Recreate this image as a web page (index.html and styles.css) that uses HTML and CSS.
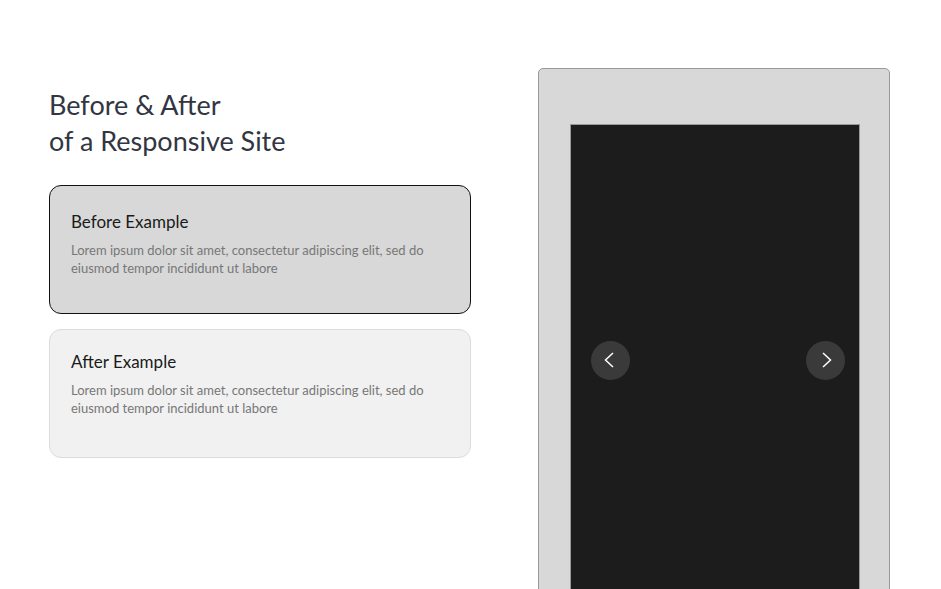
FILE: index.html
```html
<!DOCTYPE html>
<html lang="en">
<head>
<meta charset="utf-8">
<title>Before &amp; After</title>
<link rel="stylesheet" href="styles.css">
</head>
<body>
<main class="page">
  <section class="intro">
    <h1 class="heading">Before &amp; After<br>of a Responsive Site</h1>
    <div class="cards">
      <article class="card card-active">
        <h2 class="card-title">Before Example</h2>
        <p class="card-text">Lorem ipsum dolor sit amet, consectetur adipiscing elit, sed do eiusmod tempor incididunt ut labore</p>
      </article>
      <article class="card">
        <h2 class="card-title">After Example</h2>
        <p class="card-text">Lorem ipsum dolor sit amet, consectetur adipiscing elit, sed do eiusmod tempor incididunt ut labore</p>
      </article>
    </div>
  </section>
  <section class="device">
    <div class="screen">
      <button class="nav-btn nav-prev" aria-label="Previous">
        <svg width="10" height="16" viewBox="0 0 10 16"><path d="M9 1 L1.5 8 L9 15" fill="none" stroke="#fff" stroke-width="1.5"/></svg>
      </button>
      <button class="nav-btn nav-next" aria-label="Next">
        <svg width="10" height="16" viewBox="0 0 10 16"><path d="M1 1 L8.5 8 L1 15" fill="none" stroke="#fff" stroke-width="1.5"/></svg>
      </button>
    </div>
  </section>
</main>
</body>
</html>
```
FILE: styles.css
```css
html, body {
  margin: 0;
  padding: 0;
  height: 100%;
  overflow: hidden;
  background: #fff;
}
body {
  font-family: Lato, "Noto Sans", sans-serif;
}
.page {
  display: flex;
  align-items: flex-start;
  gap: 67px;
  padding: 68px 0 0 49px;
}
.intro {
  width: 422px;
  padding-top: 19px;
}
.heading {
  margin: 0 0 26px 0;
  font-size: 27px;
  font-weight: 400;
  line-height: 36px;
  color: #323642;
}
.cards {
  display: flex;
  flex-direction: column;
  gap: 15px;
}
.card {
  box-sizing: border-box;
  height: 129px;
  padding: 22px 21px 0;
  background: #f1f1f1;
  border: 1px solid #dcdcdc;
  border-radius: 12px;
}
.card-active {
  padding-top: 26px;
  background: #d8d8d8;
  border-color: #111;
}
.card-title {
  margin: 0 0 9px;
  font-size: 17px;
  font-weight: 400;
  line-height: 20px;
  color: #1a1a1a;
}
.card-text {
  margin: 0;
  font-size: 13px;
  line-height: 18px;
  color: #777;
}
.device {
  box-sizing: border-box;
  width: 352px;
  height: 560px;
  padding: 55px 29px 0 31px;
  background: #d8d8d8;
  border: 1px solid #999;
  border-radius: 5px;
}
.screen {
  box-sizing: border-box;
  height: 520px;
  background: #1c1c1c;
  border: 1px solid #999;
  display: flex;
  align-items: center;
  justify-content: space-between;
  padding: 0 14px 48px 20px;
}
.nav-btn {
  width: 39px;
  height: 39px;
  border: 0;
  border-radius: 50%;
  background: #3a3a3a;
  display: flex;
  align-items: center;
  justify-content: center;
  padding: 0;
}
.nav-prev svg {
  margin-right: 4px;
}
.nav-next svg {
  margin-left: 3px;
}
```
